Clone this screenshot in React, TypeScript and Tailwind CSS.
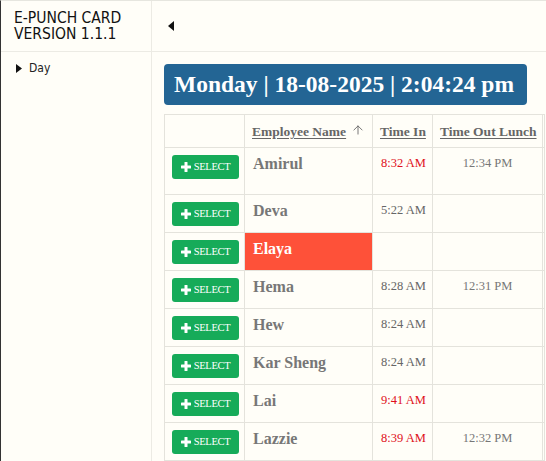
import { ArrowUp } from 'lucide-react';

type Row = {
  name: string;
  timeIn?: string;
  late?: boolean;
  outLunch?: string;
  absent?: boolean;
  tall?: boolean;
};

const rows: Row[] = [
  { name: 'Amirul', timeIn: '8:32 AM', late: true, outLunch: '12:34 PM', tall: true },
  { name: 'Deva', timeIn: '5:22 AM' },
  { name: 'Elaya', absent: true },
  { name: 'Hema', timeIn: '8:28 AM', outLunch: '12:31 PM' },
  { name: 'Hew', timeIn: '8:24 AM' },
  { name: 'Kar Sheng', timeIn: '8:24 AM' },
  { name: 'Lai', timeIn: '9:41 AM', late: true },
  { name: 'Lazzie', timeIn: '8:39 AM', late: true, outLunch: '12:32 PM' },
];

function SelectButton() {
  return (
    <button
      type="button"
      className="flex h-[24px] w-[67px] items-center justify-center gap-[3px] rounded-[3px] bg-[#16ab59] text-white"
    >
      <svg width="10" height="10" viewBox="0 0 10 10" className="shrink-0">
        <rect x="3.5" y="0" width="3" height="10" rx="0.6" fill="white" />
        <rect x="0" y="3.5" width="10" height="3" rx="0.6" fill="white" />
      </svg>
      <span className="font-['Liberation_Serif',serif] text-[10.5px] leading-none tracking-[-0.3px]">SELECT</span>
    </button>
  );
}

const th =
  'border border-[#e4e3dc] pl-[7px] pr-[4px] pb-[7px] text-left align-bottom text-[13.5px] leading-[16px] font-bold whitespace-nowrap text-[#666]';

export default function App() {
  return (
    <div className="flex h-[461px] w-[546px] overflow-hidden border-l border-t border-l-[#333] border-t-[#e6e6df] bg-[#fffef8]">
      {/* Sidebar */}
      <aside className="flex w-[151px] shrink-0 flex-col border-r border-[#ecebe4]">
        <div className="flex h-[51px] flex-col gap-[1px] border-b border-[#ecebe4] px-[13px] pt-[10px] font-['DejaVu_Sans',sans-serif] text-[15.5px] leading-[15px] font-stretch-condensed text-[#111]">
          <div>E-PUNCH CARD</div>
          <div>VERSION 1.1.1</div>
        </div>
        <div className="flex items-center gap-[7px] px-[15px] pt-[7px]">
          <svg width="6" height="9" viewBox="0 0 6 9">
            <path d="M0 0 L6 4.5 L0 9 Z" fill="#111" />
          </svg>
          <span className="font-['DejaVu_Sans',sans-serif] text-[12px] font-stretch-condensed text-[#222]">Day</span>
        </div>
      </aside>

      {/* Main */}
      <main className="min-w-0 flex-1 overflow-hidden">
        <div className="flex h-[51px] items-center border-b border-[#ecebe4] pl-[16px]">
          <svg width="6" height="10" viewBox="0 0 6 10">
            <path d="M6 0 L0 5 L6 10 Z" fill="#111" />
          </svg>
        </div>

        <div className="pl-3 pt-3">
          <div className="flex h-[41px] w-[363px] items-center rounded-[4px] bg-[#236594] pl-[10px] font-['Liberation_Serif',serif] text-[23.5px] font-bold whitespace-nowrap text-white">
            Monday | 18-08-2025 | 2:04:24 pm
          </div>

          <table className="mt-[9px] w-[380px] table-fixed border-collapse font-['Liberation_Serif',serif]">
            <colgroup>
              <col className="w-[80px]" />
              <col className="w-[128px]" />
              <col className="w-[60px]" />
              <col className="w-[110px]" />
              <col className="w-[2px]" />
            </colgroup>
            <thead>
              <tr className="h-[33px]">
                <th className="border border-[#e4e3dc]" />
                <th className={th}>
                  <span className="inline-flex items-end gap-[5px]">
                    <span className="underline underline-offset-2">Employee Name</span>
                    <ArrowUp size={14} strokeWidth={1.5} className="mb-[3px]" />
                  </span>
                </th>
                <th className={th}>
                  <span className="underline underline-offset-2">Time In</span>
                </th>
                <th className={th}>
                  <span className="underline underline-offset-2">Time Out Lunch</span>
                </th>
                <th className="border border-[#e4e3dc]" />
              </tr>
            </thead>
            <tbody>
              {rows.map((r) => (
                <tr key={r.name} className={r.tall ? 'h-[47px]' : 'h-[38px]'}>
                  <td className="border border-[#e4e3dc] pl-[7px] pt-[7px] align-top">
                    <SelectButton />
                  </td>
                  <td
                    className={`border border-[#e4e3dc] px-[8px] pt-[6px] align-top text-[16px] leading-[20px] font-bold whitespace-nowrap ${
                      r.absent ? 'bg-[#fe5139] text-white' : 'text-[#777]'
                    }`}
                  >
                    {r.name}
                  </td>
                  <td
                    className={`border border-[#e4e3dc] px-[8px] pt-[7px] align-top text-[12.5px] leading-[16px] whitespace-nowrap ${
                      r.late ? 'text-[#e0101b]' : 'text-[#666]'
                    }`}
                  >
                    {r.timeIn}
                  </td>
                  <td className="border border-[#e4e3dc] px-[4px] pt-[7px] text-center align-top text-[12.5px] leading-[16px] whitespace-nowrap text-[#777]">
                    {r.outLunch}
                  </td>
                  <td className="border border-[#e4e3dc]" />
                </tr>
              ))}
            </tbody>
          </table>
        </div>
      </main>
    </div>
  );
}
